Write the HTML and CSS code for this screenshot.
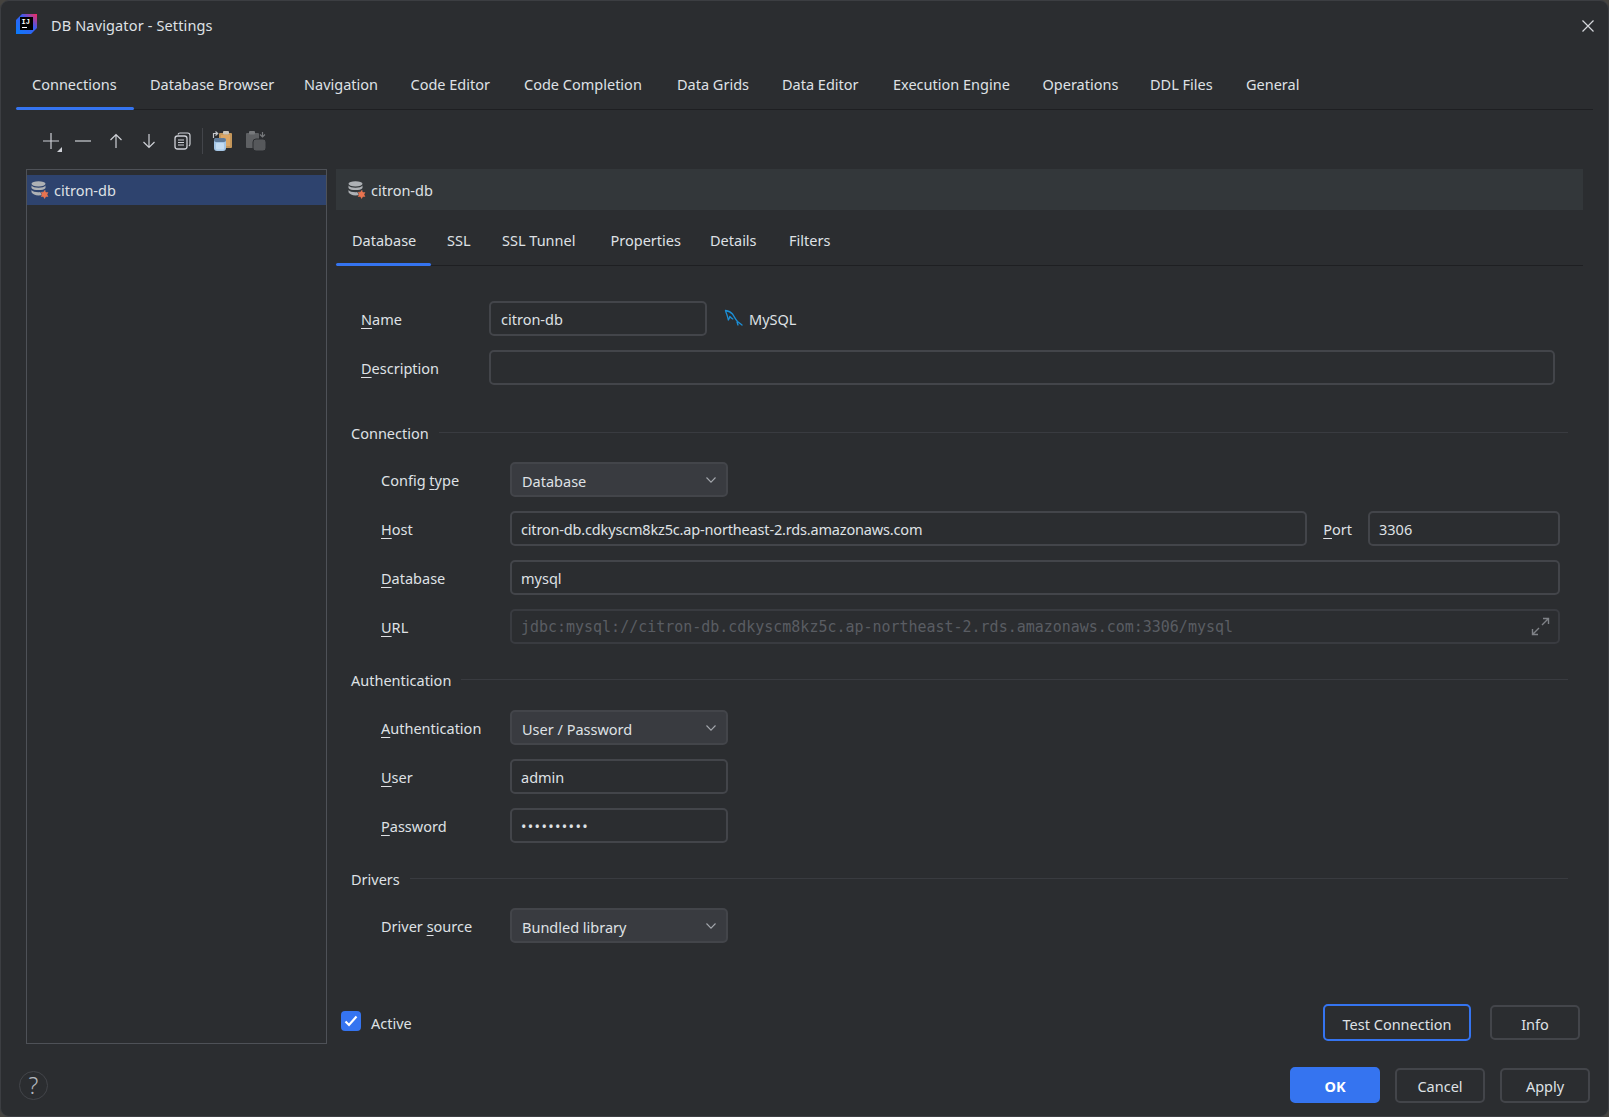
FILE: index.html
```html
<!DOCTYPE html>
<html lang="en">
<head>
<meta charset="utf-8">
<title>DB Navigator - Settings</title>
<link rel="stylesheet" href="styles.css">
</head>
<body>
<div class="window">
  <svg width="0" height="0" class="defs">
    <defs>
      <symbol id="db" viewBox="0 0 18 18">
        <ellipse cx="7.500" cy="2.800" rx="7" ry="2.600" fill="#aeb1b5"/>
        <path d="M.5 4.600c1 1.500 3.700 2.200 7 2.200s6-.7 7-2.200v2.300c-1 1.500-3.700 2.200-7 2.200s-6-.7-7-2.200z" fill="#aeb1b5"/>
        <path d="M.5 9c1 1.500 3.700 2.200 7 2.200s6-.7 7-2.200v2.300c-1 1.500-3.700 3.200-7 3.200s-6-1.700-7-3.200z" fill="#aeb1b5"/>
        <polygon class="star" points="13.600,9.100 14.900,11.250 17.400,11.300 16.200,13.500 17.400,15.700 14.900,15.750 13.600,17.900 12.300,15.750 9.800,15.700 11,13.500 9.800,11.300 12.300,11.250"/>
      </symbol>
    </defs>
  </svg>

  <header class="titlebar">
    <svg class="app-logo" width="21" height="20" viewBox="0 0 21 20">
      <defs>
        <linearGradient id="logo-grad" x1="0" y1="1" x2="1" y2="0">
          <stop offset="0" stop-color="#087cfa"/>
          <stop offset="0.6" stop-color="#3b5bf0"/>
          <stop offset="1" stop-color="#fe2857"/>
        </linearGradient>
      </defs>
      <path d="M6 0h15v14l-6 6H0V6z" fill="url(#logo-grad)"/>
      <rect x="4" y="3" width="13" height="13" fill="#000"/>
      <text x="5.500" y="9.500" class="logo-text">IJ</text>
      <rect x="6" y="13" width="5" height="1" fill="#fff"/>
    </svg>
    <span class="title">DB Navigator - Settings</span>
    <svg class="close" width="14" height="14" viewBox="0 0 14 14"><path d="M1.500 1.500l11 11M12.500 1.500l-11 11" stroke="#d5d7db" stroke-width="1.200" fill="none"/></svg>
  </header>

  <nav class="tabs main-tabs">
    <span class="tab active">Connections</span>
    <span class="tab">Database Browser</span>
    <span class="tab">Navigation</span>
    <span class="tab">Code Editor</span>
    <span class="tab">Code Completion</span>
    <span class="tab">Data Grids</span>
    <span class="tab">Data Editor</span>
    <span class="tab">Execution Engine</span>
    <span class="tab">Operations</span>
    <span class="tab">DDL Files</span>
    <span class="tab">General</span>
  </nav>

  <div class="toolbar">
    <span class="tool add">
      <svg width="20" height="20" viewBox="0 0 20 20"><path d="M10 2v16M2 10h16" stroke="#ced0d6" stroke-width="1.200" fill="none"/></svg>
      <i class="corner"></i>
    </span>
    <span class="tool"><svg width="20" height="20" viewBox="0 0 20 20"><path d="M2 10h16" stroke="#ced0d6" stroke-width="1.200" fill="none"/></svg></span>
    <span class="tool"><svg width="20" height="20" viewBox="0 0 20 20"><path d="M10 17V3.500M4.500 9L10 3.500 15.500 9" stroke="#ced0d6" stroke-width="1.200" fill="none"/></svg></span>
    <span class="tool"><svg width="20" height="20" viewBox="0 0 20 20"><path d="M10 3v13.500M4.500 11l5.500 5.500 5.500-5.500" stroke="#ced0d6" stroke-width="1.200" fill="none"/></svg></span>
    <span class="tool"><svg width="20" height="20" viewBox="0 0 20 20"><rect x="3" y="5" width="12" height="13" rx="2.500" stroke="#ced0d6" stroke-width="1.300" fill="none"/><path d="M6 3.500c.3-1 1-1.500 2-1.500h7.500c1.500 0 2.500 1 2.500 2.500V13c0 1-.5 1.700-1.200 2" stroke="#ced0d6" stroke-width="1.200" fill="none"/><path d="M6 9h6M6 11.500h6M6 14h6" stroke="#ced0d6" stroke-width="1.200" fill="none"/></svg></span>
    <i class="tool-sep"></i>
    <span class="tool import">
      <svg width="22" height="22" viewBox="0 0 22 22">
        <rect x="8" y="3" width="13" height="15" rx="1" fill="#c4965a"/>
        <rect x="10" y="5" width="9" height="11" fill="#dca664"/>
        <rect x="12" y="1" width="6" height="3.500" rx="1" fill="#c9c4ba"/>
        <rect x="3" y="8" width="12" height="13" rx="3" fill="#a5c6e6"/>
        <rect x="3" y="8" width="12" height="4" rx="2" fill="#5f7a99"/>
        <rect x="5" y="13" width="8" height="6.500" rx="1" fill="#c4dcf2"/>
        <path d="M2.500 8V3.500h4M4.500 1.500l2.200 2-2.200 2" stroke="#c5c7cb" stroke-width="1.200" fill="none"/>
      </svg>
    </span>
    <span class="tool export">
      <svg width="22" height="22" viewBox="0 0 22 22">
        <rect x="1" y="3" width="13" height="15" rx="1" fill="#5e6063"/>
        <rect x="4" y="1" width="6" height="3.500" rx="1" fill="#77797c"/>
        <rect x="8" y="9" width="13" height="12" rx="3" fill="#56585b" stroke="#2b2d30"/>
        <path d="M17.500 2v5M15 4.500l2.500 2.500L20 4.500" stroke="#77797c" stroke-width="1.200" fill="none"/>
      </svg>
    </span>
  </div>

  <main class="content">
    <aside class="conn-list">
      <div class="conn-row"><svg class="db-icon"><use href="#db"/></svg><span>citron-db</span></div>
    </aside>

    <section class="panel">
      <div class="panel-head"><svg class="db-icon"><use href="#db"/></svg><span>citron-db</span></div>
      <nav class="tabs sub-tabs">
        <span class="tab active">Database</span>
        <span class="tab">SSL</span>
        <span class="tab">SSL Tunnel</span>
        <span class="tab">Properties</span>
        <span class="tab">Details</span>
        <span class="tab">Filters</span>
      </nav>

      <div class="form">
        <div class="rows rows-top">
          <label class="lbl"><u>N</u>ame</label>
          <div class="inline">
            <div class="input w-name">citron-db</div>
            <svg class="dolphin" width="20" height="20" viewBox="0 0 20 20"><path d="M1.500 1.500c2 .3 5 1 7 3.500 1.500 2 3 5.500 5 7.500 1.500 1.200 3 2.300 4.500 3.500M1.500 1.500c.3 2 1 2.500 1.500 4.500.4 1.500 1 3 1.300 5 1-.8 1.200-2.200 1.500-3.500.8 1 2 2 3 2.500M13 13c.4 1 .6 2 1 3" stroke="#1c8fd6" stroke-width="1.300" fill="none" stroke-linecap="round" stroke-linejoin="round"/></svg>
            <span class="db-type">MySQL</span>
          </div>
          <label class="lbl"><u>D</u>escription</label>
          <div class="input"></div>
        </div>

        <div class="section-head conn-head"><span>Connection</span><i></i></div>
        <div class="rows rows-group">
          <label class="lbl">Config <u>t</u>ype</label>
          <div class="combo w-combo"><span>Database</span><svg width="10" height="6" viewBox="0 0 10 6"><path d="M.5.500L5 5.200 9.500.500" stroke="#a4a7ad" stroke-width="1.100" fill="none"/></svg></div>
          <label class="lbl"><u>H</u>ost</label>
          <div class="inline">
            <div class="input grow tight">citron-db.cdkyscm8kz5c.ap-northeast-2.rds.amazonaws.com</div>
            <label class="lbl port-lbl"><u>P</u>ort</label>
            <div class="input w-port">3306</div>
          </div>
          <label class="lbl"><u>D</u>atabase</label>
          <div class="input">mysql</div>
          <label class="lbl"><u>U</u>RL</label>
          <div class="input disabled mono">
            <span>jdbc:mysql://citron-db.cdkyscm8kz5c.ap-northeast-2.rds.amazonaws.com:3306/mysql</span>
            <svg class="expand" width="19" height="19" viewBox="0 0 19 19"><path d="M11 8l6-6M12 1.500h5.500V7M8 11l-6 6M1.500 12v5.500H7" stroke="#7f8287" stroke-width="1.400" fill="none"/></svg>
          </div>
        </div>

        <div class="section-head auth-head"><span>Authentication</span><i></i></div>
        <div class="rows rows-group">
          <label class="lbl"><u>A</u>uthentication</label>
          <div class="combo w-combo"><span>User / Password</span><svg width="10" height="6" viewBox="0 0 10 6"><path d="M.5.500L5 5.200 9.500.500" stroke="#a4a7ad" stroke-width="1.100" fill="none"/></svg></div>
          <label class="lbl"><u>U</u>ser</label>
          <div class="input w-combo">admin</div>
          <label class="lbl"><u>P</u>assword</label>
          <div class="input w-combo dots">&#8226;&#8226;&#8226;&#8226;&#8226;&#8226;&#8226;&#8226;&#8226;&#8226;</div>
        </div>

        <div class="section-head drv-head"><span>Drivers</span><i></i></div>
        <div class="rows rows-group">
          <label class="lbl">Driver <u>s</u>ource</label>
          <div class="combo w-combo"><span>Bundled library</span><svg width="10" height="6" viewBox="0 0 10 6"><path d="M.5.500L5 5.200 9.500.500" stroke="#a4a7ad" stroke-width="1.100" fill="none"/></svg></div>
        </div>
      </div>

      <div class="panel-foot">
        <span class="check"><svg width="14" height="12" viewBox="0 0 14 12"><path d="M1.500 6.500l3.500 3.500 7.500-8.500" stroke="#fff" stroke-width="2.200" fill="none"/></svg></span>
        <span class="check-lbl">Active</span>
        <button class="btn focused">Test Connection</button>
        <button class="btn info">Info</button>
      </div>
    </section>
  </main>

  <footer class="footer">
    <span class="help">?</span>
    <button class="btn primary">OK</button>
    <button class="btn plain">Cancel</button>
    <button class="btn plain">Apply</button>
  </footer>
</div>
</body>
</html>
```

FILE: styles.css
```css
* { box-sizing: border-box; }
html, body { margin: 0; padding: 0; height: 100%; background: #45433f; overflow: hidden; }
body { font-family: "Noto Sans", "Open Sans", sans-serif; font-size: 14.5px; color: #dfe1e5; }
.defs { position: absolute; }
.star { fill: #e8734f; stroke: var(--halo); stroke-width: 1; paint-order: stroke; }

.window {
  width: 1609px; height: 1117px; background: #2b2d30;
  border-radius: 9px; border: 1px solid #3c3e42;
  display: flex; flex-direction: column;
}

.titlebar { height: 52px; display: flex; align-items: center; padding: 0 15px 4px; flex: none; }
.app-logo { flex: none; margin-top: -2px; }
.logo-text { font: 700 7px "Liberation Mono", monospace; fill: #fff; }
.title { margin-left: 14px; letter-spacing: 0.140px; }
.close { margin-left: auto; margin-right: -2px; margin-top: 1px; }

.tabs { border-bottom: 1px solid #1e1f22; }
.tab { display: flex; align-items: center; position: relative; white-space: nowrap; padding-left: 16px; }
.tab.active::after {
  content: ""; position: absolute; left: 0; right: 0; bottom: -1px; height: 3px;
  background: #3574f0; border-radius: 2px;
}
.main-tabs {
  height: 57px; margin: 0 15px; flex: none; padding-top: 6px; display: grid;
  grid-template-columns: 118px 154px 106.500px 113.500px 153px 105px 111px 149.500px 107.500px 96px 100px;
}
.sub-tabs {
  height: 56px; flex: none; padding-top: 4px; display: grid;
  grid-template-columns: 95px 55px 108.500px 99.500px 79px 70px;
}

.toolbar { height: 59px; display: flex; align-items: center; padding: 2px 0 0 40px; flex: none; }
.tool { width: 32.800px; height: 24px; display: flex; align-items: center; justify-content: center; position: relative; flex: none; }
.tool.add { justify-content: flex-start; width: 26px; }
.corner { position: absolute; left: 16px; bottom: 1px; width: 0; height: 0; border-style: solid; border-width: 0 0 5px 5px; border-color: transparent transparent #ced0d6 transparent; }
.tool-sep { width: 1px; height: 26px; background: #43454a; margin: 0 3px 0 4px; flex: none; }
.tool.import { width: 32px; }
.tool.export { width: 36px; }

.content { flex: none; height: 875px; display: flex; padding-left: 25px; }
.conn-list { width: 301px; border: 1px solid #4e5157; padding-top: 5px; flex: none; }
.conn-row { --halo: #2e436e; height: 30px; background: #2e436e; display: flex; align-items: center; padding-left: 4px; gap: 5px; }
.db-icon { width: 18px; height: 18px; flex: none; }

.panel { width: 1247px; margin-left: 9px; display: flex; flex-direction: column; flex: none; }
.panel-head { --halo: #33373a; height: 41px; background: #33373a; display: flex; align-items: center; padding-left: 12px; gap: 5px; flex: none; }

.form { padding: 35px 15px 0 15px; flex: none; }
.rows { display: grid; grid-template-columns: 129px 1fr; align-items: center; }
.rows-top { grid-template-columns: 128px 1fr; padding-left: 10px; row-gap: 14px; padding-right: 13px; grid-auto-rows: 35px; }
.rows-group { padding-left: 30px; padding-right: 8px; row-gap: 14px; grid-auto-rows: 35px; }
.lbl { display: block; }
.lbl u { text-underline-offset: 3px; text-decoration-thickness: 1px; }

.input, .combo {
  height: 35px; border: 2px solid #43454a; border-radius: 5px;
  display: flex; align-items: center; padding: 0 9px; white-space: nowrap;
}
.combo { background: #393b40; justify-content: space-between; padding-right: 10px; }
.combo span { padding-left: 1px; padding-top: 2px; }
.rows-top .input { padding-left: 10px; }
.w-name { width: 218px; }
.w-combo { width: 218px; }
.grow { flex: 1; }
.tight { letter-spacing: -0.170px; }
.w-port { width: 192px; }
.inline { display: flex; align-items: center; }
.dolphin { margin-left: 17px; flex: none; }
.db-type { margin-left: 5px; }
.port-lbl { margin: 0 16px; }
.disabled { border-color: #393b40; color: #5a5d63; justify-content: space-between; padding-right: 8px; }
.mono { font-family: "DejaVu Sans Mono", "Liberation Mono", monospace; font-size: 14.970px; }
.dots { letter-spacing: 1.350px; }

.section-head { display: flex; align-items: center; gap: 10px; height: 20px; }
.section-head i { flex: 1; height: 1px; background: #393b40; margin-top: -2px; }
.conn-head { margin-top: 38px; margin-bottom: 19px; }
.auth-head { margin-top: 26px; margin-bottom: 20px; }
.drv-head { margin-top: 26px; margin-bottom: 19px; }

.panel-foot { margin-top: auto; height: 47px; display: flex; align-items: center; padding: 4px 3px 0 5px; }
.check { width: 20px; height: 20px; background: #3574f0; border-radius: 4px; display: flex; align-items: center; justify-content: center; flex: none; margin-top: -3px; }
.check-lbl { margin-left: 10px; margin-right: auto; }

.btn {
  font: inherit; color: #dfe1e5; background: transparent;
  border: 2px solid #43454a; border-radius: 5px; height: 35px; padding: 2px 0 0; flex: none;
}
.btn.focused { width: 148px; height: 37px; border-color: #3574f0; }
.btn.info { width: 90px; margin-left: 19px; }
.footer { flex: 1; display: flex; align-items: center; padding: 10px 18px 0 18px; }
.help {
  width: 29px; height: 29px; border: 1px solid #43454a; border-radius: 50%;
  display: flex; align-items: center; justify-content: center; color: #b4b8bf; font-size: 23px; font-weight: 300;
  margin-right: auto;
}
.btn.primary { width: 90px; height: 36px; background: #3574f0; border-color: #3574f0; color: #fff; font-weight: 700; }
.btn.plain { width: 90px; margin-left: 15px; }
```
